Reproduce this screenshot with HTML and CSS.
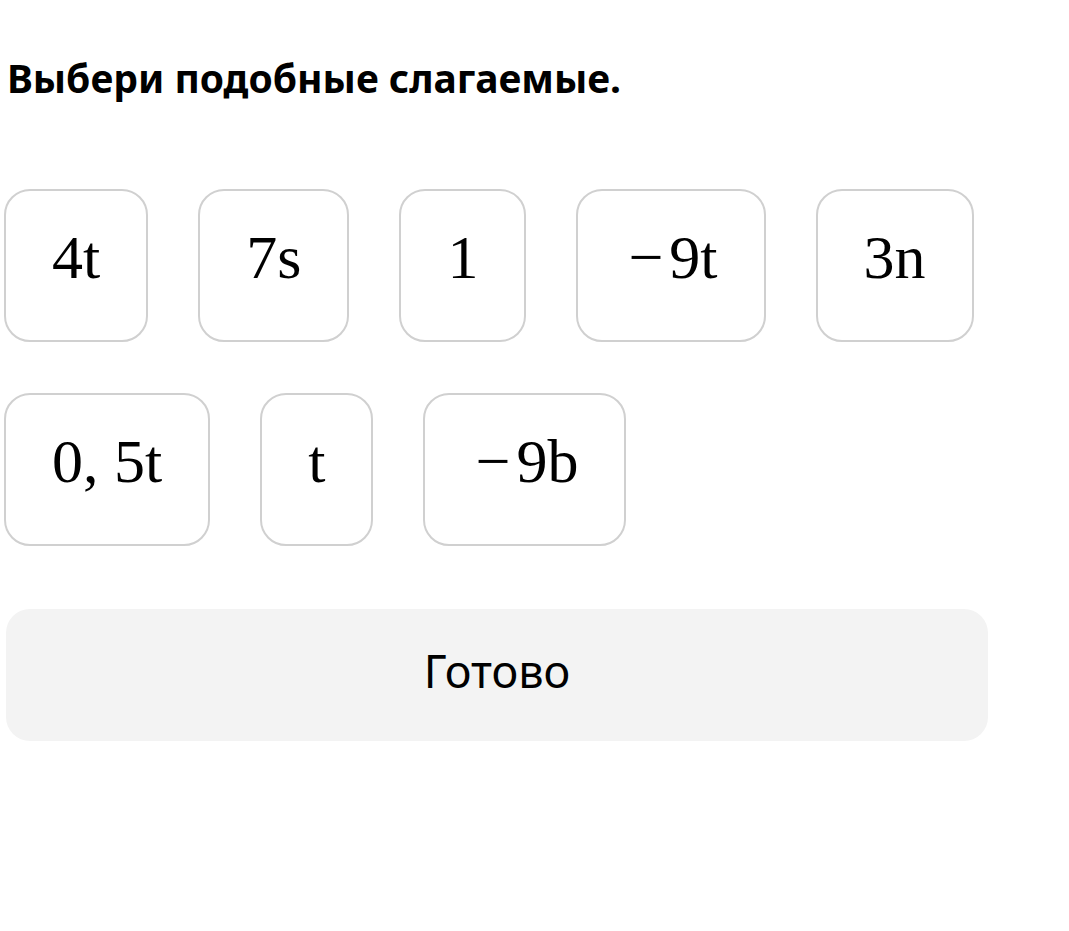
FILE: index.html
```html
<!DOCTYPE html>
<html lang="ru">
<head>
    <meta charset="UTF-8">
    <meta name="viewport" content="width=device-width, initial-scale=1.0">
    <title>Подобные слагаемые</title>
    <link rel="stylesheet" href="styles.css">
</head>
<body>
    <div class="task">
        <h1 class="question">Выбери подобные слагаемые.</h1>

        <!-- Варианты ответа -->
        <div class="options">
            <div class="option">4t</div>
            <div class="option">7s</div>
            <div class="option">1</div>
            <div class="option"><span class="minus">&minus;</span>9t</div>
            <div class="option">3n</div>
            <div class="option">0, 5t</div>
            <div class="option">t</div>
            <div class="option"><span class="minus">&minus;</span>9b</div>
        </div>

        <button class="done">Готово</button>
    </div>
</body>
</html>
```

FILE: styles.css
```css
body {
    margin: 0;
    padding: 0;
    background: #fff;
    color: #000;
    font-family: "Noto Sans", "Open Sans", sans-serif;
}
.task {
    width: 984px;
    padding: 52px 0 0 4px;
}
.question {
    margin: 0 0 0 3px;
    font-size: 39px;
    font-weight: 700;
    line-height: 52px;
}
.options {
    display: flex;
    flex-wrap: wrap;
    column-gap: 50px;
    row-gap: 51px;
    margin-top: 85px;
    width: 980px;
}
.option {
    height: 153px;
    padding: 0 46px 16px;
    box-sizing: border-box;
    border: 2px solid #d0d0d0;
    border-radius: 26px;
    display: flex;
    align-items: center;
    justify-content: center;
    font-family: "Liberation Serif", "DejaVu Serif", serif;
    font-size: 62px;
}
.minus {
    margin: 0 6px 0 4px;
}
.done {
    display: block;
    margin: 63px 0 0 2px;
    width: 982px;
    height: 132px;
    padding-bottom: 10px;
    border: none;
    border-radius: 24px;
    background: #f3f3f3;
    color: #000;
    font-family: "Noto Sans", "Open Sans", sans-serif;
    font-size: 45px;
    cursor: pointer;
}
```
